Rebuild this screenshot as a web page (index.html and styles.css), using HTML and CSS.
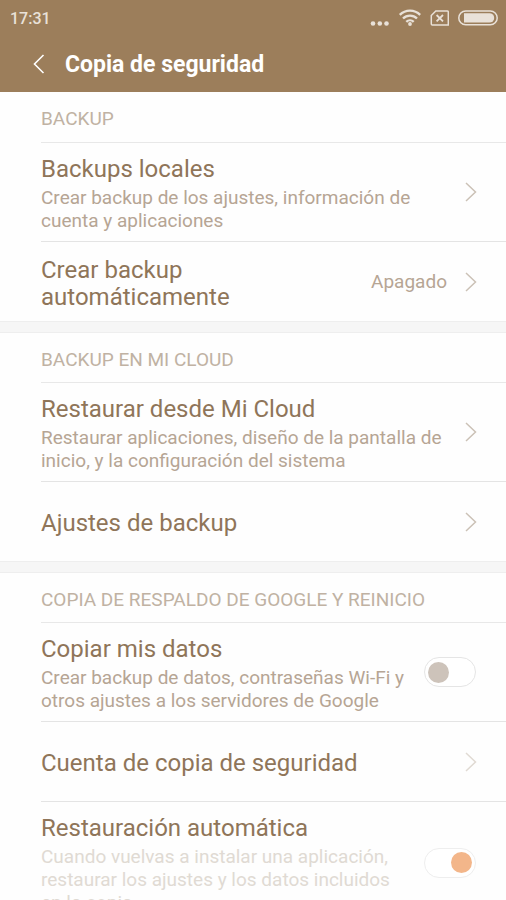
FILE: index.html
```html
<!DOCTYPE html>
<html lang="es">
<head>
<meta charset="utf-8">
<meta name="viewport" content="width=device-width, initial-scale=1">
<title>Copia de seguridad</title>
<link rel="stylesheet" href="styles.css">
</head>
<body>
<svg class="defs" aria-hidden="true">
  <symbol id="chevron" viewBox="0 0 12 20"><path d="M1 1l9.500 9L1 19" fill="none" stroke="currentColor" stroke-width="1.500"/></symbol>
</svg>
<header class="top">
  <div class="status">
    <time>17:31</time>
    <div class="status-icons">
      <svg width="20" height="20" viewBox="0 0 20 20" fill="currentColor" aria-hidden="true"><circle cx="4" cy="15.500" r="2.300"/><circle cx="10.800" cy="15.500" r="2.300"/><circle cx="17.500" cy="15.500" r="2.300"/></svg>
      <svg width="24" height="20" viewBox="0 0 24 20" fill="none" stroke="currentColor" stroke-width="2.400" aria-hidden="true"><path d="M2.800 6.800a14.500 14.500 0 0 1 20.400 0M6 10.500a10 10 0 0 1 14 0M9.300 13.900a5.300 5.300 0 0 1 7.400 0"/><circle cx="13" cy="16" r="1.900" fill="currentColor" stroke="none"/></svg>
      <svg width="20" height="20" viewBox="0 0 20 20" fill="none" stroke="currentColor" stroke-width="1.500" aria-hidden="true"><path d="M6.800 3h11.500q1 0 1 1v13h-16q-1 0-1-1V7.500z"/><path d="M7.600 7l6.400 6.400M14 7l-6.400 6.400" stroke-width="1.800"/></svg>
      <svg width="42" height="20" viewBox="0 0 42 20" aria-hidden="true"><rect x="1.800" y="3" width="38.400" height="13.800" rx="6.900" fill="none" stroke="currentColor" stroke-width="1.500"/><path d="M7 5.200h25.500a4.700 4.700 0 0 1 0 9.400H7z" fill="currentColor"/></svg>
    </div>
  </div>
  <div class="bar">
    <button class="back" type="button" aria-label="Volver"><svg width="12" height="20" viewBox="0 0 12 20" aria-hidden="true"><path d="M10.500 1L1.500 10l9 9" fill="none" stroke="currentColor" stroke-width="1.600"/></svg></button>
    <h1>Copia de seguridad</h1>
  </div>
</header>
<main>
  <section>
    <h2>BACKUP</h2>
    <a class="row" href="#locales">
      <span class="text"><span class="title">Backups locales</span><span class="note">Crear backup de los ajustes, información de cuenta y aplicaciones</span></span>
      <svg class="chevron" aria-hidden="true"><use href="#chevron"/></svg>
    </a>
    <a class="row" href="#automatico">
      <span class="text"><span class="title">Crear backup automáticamente</span></span>
      <span class="value">Apagado</span>
      <svg class="chevron" aria-hidden="true"><use href="#chevron"/></svg>
    </a>
  </section>
  <section>
    <h2>BACKUP EN MI CLOUD</h2>
    <a class="row" href="#restaurar">
      <span class="text"><span class="title">Restaurar desde Mi Cloud</span><span class="note">Restaurar aplicaciones, diseño de la pantalla de inicio, y la configuración del sistema</span></span>
      <svg class="chevron" aria-hidden="true"><use href="#chevron"/></svg>
    </a>
    <a class="row" href="#ajustes">
      <span class="text"><span class="title">Ajustes de backup</span></span>
      <svg class="chevron" aria-hidden="true"><use href="#chevron"/></svg>
    </a>
  </section>
  <section>
    <h2>COPIA DE RESPALDO DE GOOGLE Y REINICIO</h2>
    <label class="row">
      <span class="text"><span class="title">Copiar mis datos</span><span class="note">Crear backup de datos, contraseñas Wi-Fi y otros ajustes a los servidores de Google</span></span>
      <input class="switch" type="checkbox">
    </label>
    <a class="row dim" href="#cuenta">
      <span class="text"><span class="title">Cuenta de copia de seguridad</span></span>
      <svg class="chevron" aria-hidden="true"><use href="#chevron"/></svg>
    </a>
    <label class="row dim">
      <span class="text"><span class="title">Restauración automática</span><span class="note">Cuando vuelvas a instalar una aplicación, restaurar los ajustes y los datos incluidos en la copia</span></span>
      <input class="switch" type="checkbox" checked disabled>
    </label>
  </section>
</main>
</body>
</html>
```
FILE: styles.css
```css
*,
*::before {
  box-sizing: border-box;
}

html {
  scrollbar-width: none;
}

body {
  margin: 0;
  background: #fefefe;
  color: #8f7559;
  font-family: Roboto, "Liberation Sans", sans-serif;
}

.defs {
  display: none;
}

.top {
  background: #9c7e5b;
  color: #fff;
}

.status {
  display: flex;
  align-items: center;
  justify-content: space-between;
  height: 36px;
  padding: 0 7px 0 10px;
  color: #e9e1d8;
  font-size: 16px;
  font-weight: 500;
}

.status-icons {
  display: flex;
  gap: 8px;
}

.bar {
  display: flex;
  align-items: center;
  gap: 20px;
  height: 56px;
  padding: 0 33px;
}

.back {
  display: flex;
  padding: 0;
  border: 0;
  background: none;
  color: inherit;
}

h1 {
  margin: 0;
  padding-top: 2px;
  font-size: 23px;
  font-weight: 700;
  line-height: 28px;
}

section + section::before {
  content: "";
  display: block;
  height: 12px;
  border: solid #eeeeee;
  border-width: 1px 0;
  background: #f6f6f6;
}

h2 {
  margin: 0 0 0 41px;
  padding: 16px 0 12px;
  border-bottom: 1px solid #e8e8e8;
  color: #c0b2a3;
  font-size: 19px;
  font-weight: 400;
  line-height: 22px;
}

section + section h2 {
  padding-bottom: 11px;
}

.row {
  display: flex;
  align-items: center;
  min-height: 79px;
  margin-left: 41px;
  padding-right: 29px;
  color: inherit;
  text-decoration: none;
}

.row + .row {
  border-top: 1px solid #e4e4e4;
  min-height: 80px;
}

.text {
  flex: 1;
  padding: 13px 0 9px;
}

.title,
.note {
  display: block;
}

.title {
  font-size: 24px;
  line-height: 27px;
}

.note {
  margin-top: 3px;
  color: #b6a594;
  font-size: 19px;
  line-height: 23px;
}

.value {
  color: #b6a594;
  font-size: 19px;
}

.chevron {
  flex: none;
  width: 12px;
  height: 20px;
  margin-left: 18px;
  color: #cbc1b6;
}

.dim .note,
.dim .chevron {
  color: #e0dad3;
}

.switch {
  flex: none;
  appearance: none;
  display: flex;
  align-items: center;
  width: 52px;
  height: 30px;
  margin: 0 1px 0 18px;
  padding: 0 3px;
  border: 1px solid #e5e5e5;
  border-radius: 15px;
  background: #fff;
}

.switch::before {
  content: "";
  width: 21px;
  height: 21px;
  border-radius: 50%;
  background: #cdc3ba;
}

.switch:checked {
  justify-content: flex-end;
}

.switch:checked::before {
  background: #f3b68a;
}

.switch:disabled {
  border-color: #eeeeee;
}
```
